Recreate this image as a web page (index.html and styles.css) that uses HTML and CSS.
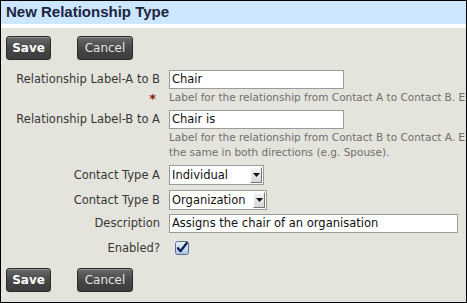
FILE: index.html
```html
<!DOCTYPE html>
<html>
<head>
<meta charset="utf-8">
<link rel="stylesheet" href="styles.css">
</head>
<body>
<div class="page">
  <div class="header"><h1>New Relationship Type</h1></div>
  <div class="content">
    <div class="buttons">
      <button class="btn btn-save">Save</button>
      <button class="btn btn-cancel">Cancel</button>
    </div>
    <div class="form">
      <label class="lbl">Relationship Label-A to B</label>
      <div class="field"><input class="text w1" type="text" value="Chair"></div>

      <div class="req">*</div>
      <div class="help">Label for the relationship from Contact A to Contact B. EXAMPLE: Contact A is 'Parent of' Contact B.</div>

      <label class="lbl">Relationship Label-B to A</label>
      <div class="field"><input class="text w1" type="text" value="Chair is"></div>

      <div></div>
      <div class="help help2">Label for the relationship from Contact B to Contact A. EXAMPLE: Contact B is 'Child of' Contact A. You may leave this blank for relationships where the name is<br>the same in both directions (e.g. Spouse).</div>

      <label class="lbl">Contact Type A</label>
      <div class="field">
        <div class="select sa"><span class="sel-text">Individual</span><span class="sel-btn"><svg width="7" height="4" viewBox="0 0 7 4"><path d="M0 0h7L3.5 4z" fill="#111"/></svg></span></div>
      </div>

      <label class="lbl">Contact Type B</label>
      <div class="field">
        <div class="select sb"><span class="sel-text">Organization</span><span class="sel-btn"><svg width="7" height="4" viewBox="0 0 7 4"><path d="M0 0h7L3.5 4z" fill="#111"/></svg></span></div>
      </div>

      <label class="lbl">Description</label>
      <div class="field"><input class="text w2" type="text" value="Assigns the chair of an organisation"></div>

      <label class="lbl">Enabled?</label>
      <div class="field">
        <svg class="check" width="14" height="14" viewBox="0 0 14 14">
          <defs>
            <linearGradient id="cg" x1="0" y1="0" x2="0" y2="1">
              <stop offset="0" stop-color="#eaf3fc"/>
              <stop offset="1" stop-color="#a9c6e6"/>
            </linearGradient>
          </defs>
          <rect x="0.5" y="0.5" width="13" height="13" rx="2" fill="url(#cg)" stroke="#5b6f8c"/>
          <path d="M3 7.2l2.6 3L11.8 2" fill="none" stroke="#101a4a" stroke-width="2.2" stroke-linecap="round" stroke-linejoin="round"/>
        </svg>
      </div>
    </div>
    <div class="buttons bottom">
      <button class="btn btn-save">Save</button>
      <button class="btn btn-cancel">Cancel</button>
    </div>
  </div>
</div>
</body>
</html>
```
FILE: styles.css
```css
html, body {
  margin: 0;
  padding: 0;
  background: #e5e4dc;
}
.page {
  width: 467px;
  height: 303px;
  box-sizing: border-box;
  border: 1px solid #000;
  overflow: hidden;
  background: #e5e4dc;
  font-family: "DejaVu Sans", Verdana, sans-serif;
}
.header {
  height: 23px;
  background: #cce6fe;
  border-bottom: 4px solid #fff;
}
.header h1 {
  margin: 0;
  padding: 2px 0 0 5px;
  font-family: "Liberation Sans", Arial, sans-serif;
  font-size: 15px;
  line-height: 18px;
  font-weight: bold;
  color: #1c2440;
}
.content {
  padding-top: 8px;
}
.buttons {
  display: flex;
  gap: 26px;
  padding-left: 5px;
}
.buttons.bottom {
  margin-top: 6px;
}
.btn {
  height: 24px;
  box-sizing: border-box;
  padding: 0;
  border: 1px solid #2a2a2a;
  border-radius: 3px;
  background: linear-gradient(#6a6a6a, #474747 50%, #3c3c3c);
  box-shadow: inset 0 1px 0 rgba(255,255,255,0.25);
  font-family: "DejaVu Sans", Verdana, sans-serif;
  font-size: 12px;
  color: #fff;
}
.btn-save {
  width: 45px;
  font-weight: bold;
}
.btn-cancel {
  width: 56px;
  color: #e4e4e4;
}
.form {
  margin-top: 8px;
  display: grid;
  grid-template-columns: 159px 1fr;
  column-gap: 9px;
  grid-template-rows: 22px 18px 22px 32px 25px 25px 22px 28px;
  align-items: center;
  font-size: 11.5px;
  color: #363636;
}
.lbl {
  text-align: right;
  white-space: nowrap;
}
.field {
  display: flex;
  align-items: center;
}
.text {
  box-sizing: border-box;
  height: 19px;
  border: 1px solid #9a9a9a;
  background: #fff;
  padding: 0 2px;
  font-family: "DejaVu Sans", Verdana, sans-serif;
  font-size: 11.5px;
  color: #111;
  outline: none;
}
.w1 { width: 175px; }
.w2 { width: 289px; }
.req {
  text-align: right;
  color: #8b1a1a;
  font-weight: bold;
  font-size: 13px;
  align-self: start;
  padding-right: 4px;
  line-height: 14px;
  padding-top: 2px;
}
.help {
  align-self: start;
  font-size: 10.5px;
  line-height: 14px;
  color: #6e6e6e;
  white-space: nowrap;
}
.help2 {
  line-height: 15px;
}
.select {
  display: flex;
  align-items: stretch;
  box-sizing: border-box;
  height: 20px;
  border: 1px solid #9a9a9a;
  background: #fff;
}
.sa { width: 95px; }
.sb { width: 98px; }
.sel-text {
  flex: 1;
  padding-left: 2px;
  font-size: 11.5px;
  line-height: 18px;
  color: #111;
  white-space: nowrap;
  overflow: hidden;
}
.sel-btn {
  width: 12px;
  margin: 1px;
  display: flex;
  align-items: center;
  justify-content: center;
  background: linear-gradient(#f4f4f4, #d8d8d8);
  border: 1px solid;
  border-color: #fff #777 #777 #fff;
  box-sizing: border-box;
}
.check {
  margin-left: 6px;
}
```
